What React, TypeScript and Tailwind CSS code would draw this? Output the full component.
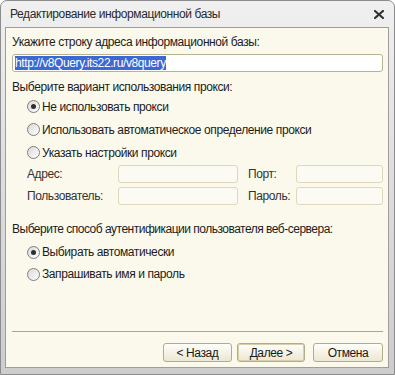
import React from "react";

function Radio({ checked, label }: { checked?: boolean; label: string }) {
  return (
    <div className="flex items-center">
      <div className="w-[13px] h-[13px] rounded-full border border-[#7f7f7f] bg-gradient-to-br from-[#d8d8d8] to-[#ffffff] flex items-center justify-center">
        {checked && <div className="w-[5px] h-[5px] rounded-full bg-[#2e2e2e]" />}
      </div>
      <span className="ml-[2px]">{label}</span>
    </div>
  );
}

function Field({ w }: { w: string }) {
  return <div className={`h-[18px] rounded-[3px] border border-[#ddd7bd] bg-[#fcfbf3] ${w}`} />;
}

function Btn({ label, w, def }: { label: string; w: string; def?: boolean }) {
  return (
    <div
      className={`h-[19px] rounded-[3px] border border-[#b3ac8b] bg-gradient-to-b from-[#fefefb] to-[#ece7d1] flex items-center justify-center text-[#1a1a1a] ${w} ${
        def ? "shadow-[inset_0_0_0_1px_#d8d0a8]" : ""
      }`}
    >
      {label}
    </div>
  );
}

export default function App() {
  return (
    <div
      className="w-[395px] h-[375px] bg-white text-[12px] tracking-[-0.4px] leading-[16px] text-[#1c1c1c]"
      style={{ fontFamily: '"Liberation Sans", Arial, sans-serif' }}
    >
      <div className="w-full h-full rounded-t-[7px] border border-[#8c8c8c] bg-gradient-to-b from-[#f0f0f0] via-[#dddddd] to-[#cdcdcd] flex flex-col">
        <div className="h-[26px] flex items-center justify-between pl-[9px] pr-[10px] shrink-0">
          <span className="text-[#2a2a2a]">Редактирование информационной базы</span>
          <svg width="10" height="9" viewBox="0 0 10 9">
            <path d="M1 1 L9 8 M9 1 L1 8" stroke="#333" strokeWidth="2.2" strokeLinecap="square" />
          </svg>
        </div>
        <div className="flex-1 ml-[4px] mr-[5px] mb-[6px] border border-[#9d9d9d] bg-[#fbf9ec] flex flex-col pl-[6px] pr-[5px]">
          <div className="mt-[6px]">Укажите строку адреса информационной базы:</div>
          <div className="mt-[4px] h-[18px] rounded-[3px] border border-[#b9b28e] bg-white flex items-center pl-[2px]">
            <span className="bg-[#3a68d4] text-white leading-[14px]">http://v8Query.its22.ru/v8query</span>
          </div>
          <div className="mt-[7px]">Выберите вариант использования прокси:</div>
          <div className="pl-[15px] flex flex-col">
            <div className="h-[23px] flex items-center">
              <Radio checked label="Не использовать прокси" />
            </div>
            <div className="h-[23px] flex items-center">
              <Radio label="Использовать автоматическое определение прокси" />
            </div>
            <div className="h-[23px] flex items-center">
              <Radio label="Указать настройки прокси" />
            </div>
            <div className="mt-[1px] flex items-center">
              <span className="w-[91px] text-[#333]">Адрес:</span>
              <Field w="w-[120px]" />
              <span className="ml-[10px] w-[48px] text-[#333]">Порт:</span>
              <Field w="w-[87px]" />
            </div>
            <div className="mt-[4px] flex items-center">
              <span className="w-[91px] text-[#333]">Пользователь:</span>
              <Field w="w-[120px]" />
              <span className="ml-[10px] w-[48px] text-[#333]">Пароль:</span>
              <Field w="w-[87px]" />
            </div>
          </div>
          <div className="mt-[16px] tracking-[-0.5px]">Выберите способ аутентификации пользователя веб-сервера:</div>
          <div className="pl-[15px] mt-[4px] flex flex-col">
            <div className="h-[22px] flex items-center">
              <Radio checked label="Выбирать автоматически" />
            </div>
            <div className="h-[22px] flex items-center">
              <Radio label="Запрашивать имя и пароль" />
            </div>
          </div>
          <div className="flex-1" />
          <div className="h-[1px] bg-[#aca68b]" />
          <div className="mt-[11px] mb-[5px] flex justify-end">
            <Btn label="< Назад" w="w-[69px]" />
            <div className="w-[5px]" />
            <Btn label="Далее >" w="w-[68px]" def />
            <div className="w-[8px]" />
            <Btn label="Отмена" w="w-[70px]" />
          </div>
        </div>
      </div>
    </div>
  );
}
